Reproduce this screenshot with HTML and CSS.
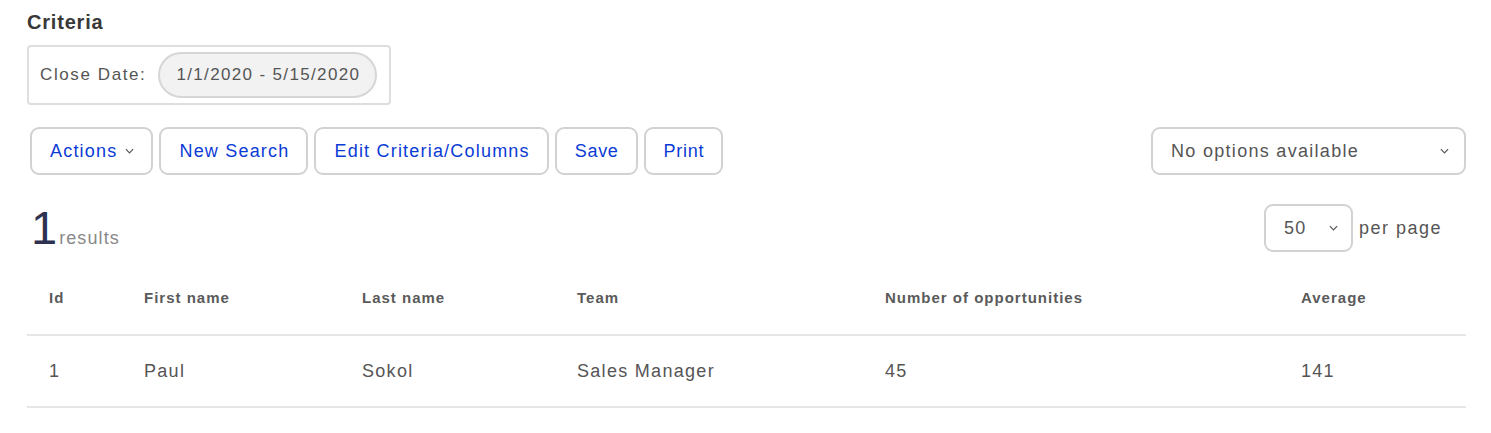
FILE: index.html
```html
<!DOCTYPE html>
<html>
<head>
<meta charset="utf-8">
<link rel="stylesheet" href="styles.css">
</head>
<body>
<div class="page">
  <h2 class="title">Criteria</h2>
  <div class="criteria">
    <span class="crit-label">Close Date:</span>
    <span class="pill">1/1/2020 - 5/15/2020</span>
  </div>

  <div class="toolbar">
    <div class="btns">
      <button class="btn">Actions <svg class="chev" viewBox="0 0 10 6" width="9" height="6"><path d="M1 1 L5 5 L9 1" fill="none" stroke="#555" stroke-width="1.3"/></svg></button>
      <button class="btn">New Search</button>
      <button class="btn">Edit Criteria/Columns</button>
      <button class="btn tight">Save</button>
      <button class="btn tight">Print</button>
    </div>
    <div class="select wide">
      <span>No options available</span>
      <svg class="chev" viewBox="0 0 10 6" width="9" height="6"><path d="M1 1 L5 5 L9 1" fill="none" stroke="#555" stroke-width="1.3"/></svg>
    </div>
  </div>

  <div class="results-row">
    <div class="count"><span class="num">1</span><span class="label">results</span></div>
    <div class="perpage">
      <div class="select small">
        <span>50</span>
        <svg class="chev" viewBox="0 0 10 6" width="9" height="6"><path d="M1 1 L5 5 L9 1" fill="none" stroke="#555" stroke-width="1.3"/></svg>
      </div>
      <span class="pp-label">per page</span>
    </div>
  </div>

  <div class="table">
    <div class="row head">
      <div class="cell">Id</div>
      <div class="cell">First name</div>
      <div class="cell">Last name</div>
      <div class="cell">Team</div>
      <div class="cell">Number of opportunities</div>
      <div class="cell">Average</div>
    </div>
    <div class="row">
      <div class="cell">1</div>
      <div class="cell">Paul</div>
      <div class="cell">Sokol</div>
      <div class="cell">Sales Manager</div>
      <div class="cell">45</div>
      <div class="cell">141</div>
    </div>
  </div>
</div>
</body>
</html>
```

FILE: styles.css
```css
* { box-sizing: border-box; }
body {
  margin: 0;
  background: #fff;
  font-family: "Liberation Sans", Arial, sans-serif;
  color: #555;
}
.page {
  padding: 10px 25px 0 27px;
}
.title {
  margin: 0;
  font-size: 20px;
  line-height: 24px;
  font-weight: bold;
  color: #383838;
  letter-spacing: 0.8px;
}
.criteria {
  margin-top: 11px;
  display: inline-flex;
  align-items: center;
  gap: 12px;
  height: 60px;
  padding: 0 12px 0 11px;
  border: 2px solid #dedede;
  border-radius: 4px;
}
.crit-label {
  font-size: 17px;
  color: #555;
  letter-spacing: 1.6px;
}
.pill {
  display: inline-flex;
  align-items: center;
  height: 46px;
  padding: 0 15px 0 16px;
  background: #f2f2f2;
  border: 2px solid #d6d6d6;
  border-radius: 23px;
  font-size: 17px;
  color: #555;
  letter-spacing: 1.35px;
}
.toolbar {
  margin-top: 22px;
  display: flex;
  justify-content: space-between;
  align-items: center;
}
.btns {
  display: flex;
  gap: 6px;
  padding-left: 3px;
}
.btn {
  height: 48px;
  padding: 0 17px 0 18px;
  background: #fff;
  border: 2px solid #d2d2d2;
  border-radius: 9px;
  font-family: inherit;
  font-size: 18px;
  color: #0b3bd6;
  letter-spacing: 1.2px;
  display: inline-flex;
  align-items: center;
  gap: 8px;
}
.btn.tight {
  letter-spacing: 0.7px;
}
.chev { display: block; }
.select {
  display: flex;
  align-items: center;
  justify-content: space-between;
  height: 48px;
  background: #fff;
  border: 2px solid #d2d2d2;
  border-radius: 9px;
  font-size: 18px;
  color: #555;
  letter-spacing: 1.3px;
}
.select.wide {
  width: 315px;
  padding: 0 15px 0 18px;
}
.select.small {
  width: 89px;
  padding: 0 13px 0 18px;
}
.results-row {
  margin-top: 29px;
  display: flex;
  justify-content: space-between;
  align-items: center;
  padding-right: 24px;
}
.count {
  display: flex;
  align-items: baseline;
  padding-left: 4px;
}
.num {
  font-size: 47px;
  line-height: 46px;
  color: #2f3150;
  letter-spacing: -3px;
}
.label {
  margin-left: 5px;
  font-size: 18px;
  color: #888;
  letter-spacing: 1.1px;
}
.perpage {
  display: flex;
  align-items: center;
  gap: 6px;
}
.pp-label {
  font-size: 18px;
  color: #555;
  letter-spacing: 1.5px;
}
.table {
  margin-top: 12px;
}
.row {
  display: grid;
  grid-template-columns: 95px 218px 215px 308px 416px 1fr;
  align-items: center;
  height: 72px;
  border-bottom: 2px solid #e6e6e6;
}
.row .cell {
  padding-left: 22px;
  font-size: 18px;
  color: #555;
  letter-spacing: 1.3px;
}
.row.head .cell {
  font-size: 15px;
  font-weight: bold;
  color: #5a5a5a;
  letter-spacing: 1px;
  padding-bottom: 3px;
}
```
